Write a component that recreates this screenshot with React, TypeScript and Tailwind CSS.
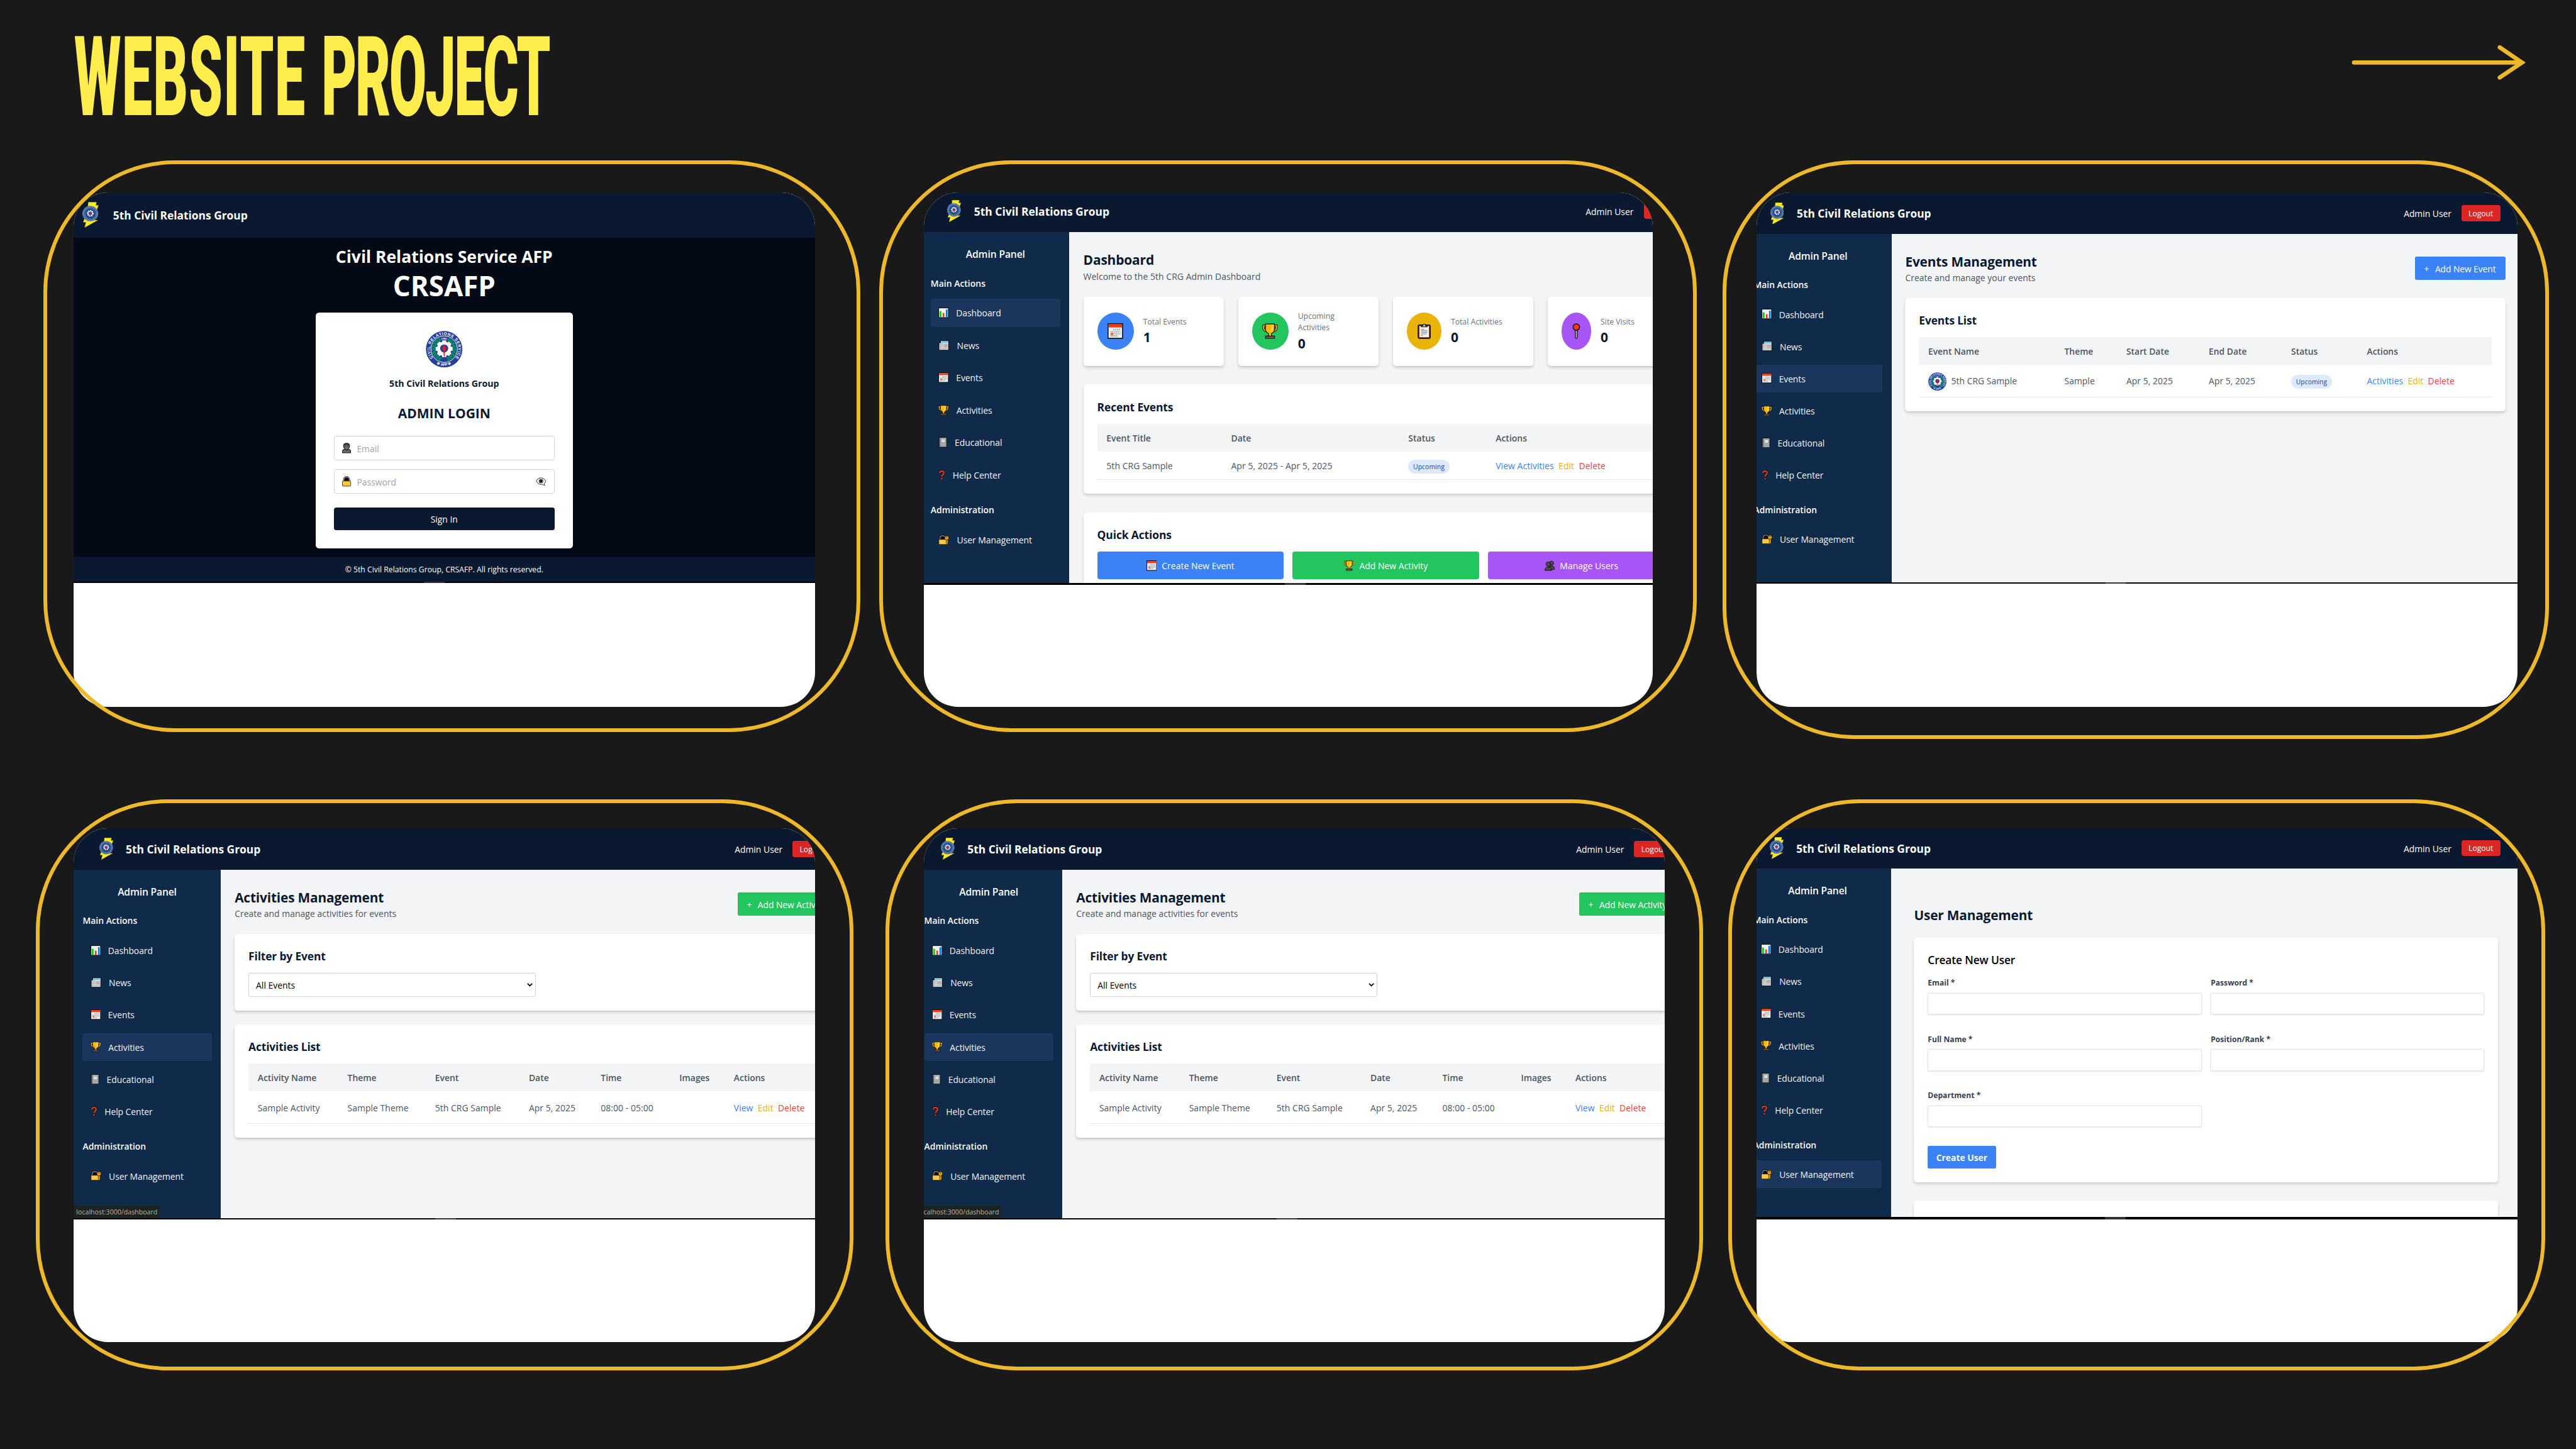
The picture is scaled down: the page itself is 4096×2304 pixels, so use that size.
import type { ReactNode } from "react";

/* ---------- type styles ---------- */
const T12 = "text-[11.4px] leading-[16px]";
const T14 = "text-[13.3px] leading-[22px] -mb-[2px]";
const T16 = "text-[15.2px] leading-[26px] -mb-[2px]";
const T18 = "text-[17.1px] leading-[30px] tracking-[-0.01em]";
const T20 = "text-[19px] leading-[30px]";
const T24 = "text-[22.8px] leading-[34px] -mb-[2px]";

/* ---------- icons ---------- */
type IconProps = { className?: string };

const ChartIcon = ({ className = "size-[18px]" }: IconProps) => (
  <svg viewBox="0 0 18 18" className={className}>
    <rect x="0.6" y="0.6" width="16.8" height="16.8" fill="#f2f2f2" stroke="#0c0f14" strokeWidth="1.2" />
    <rect x="2.2" y="6.2" width="3" height="10.4" fill="#16c60c" />
    <rect x="7.6" y="9.4" width="2.8" height="7.2" fill="#f03a17" />
    <rect x="13" y="3.4" width="2.8" height="13.2" fill="#0078d7" />
  </svg>
);

const NewsIcon = ({ className = "size-[18px]" }: IconProps) => (
  <svg viewBox="0 0 18 18" className={className}>
    <path d="M3.2 .7h14.2v16.6H1.8Q.6 17.3.6 16V4.4h2.6z" fill="#dcdcdc" stroke="#0c0f14" strokeWidth="1.2" />
    <path d="M3.4 4.4V16" stroke="#8d8d8d" strokeWidth=".8" />
    <rect x="4.4" y="2" width="11.8" height="2.2" fill="#50c8f0" />
    <rect x="8.6" y="6.4" width="7.6" height="6" fill="#b4b4b4" />
    <path d="M4.6 6h3M4.6 8.4h3M4.6 10.8h3M4.6 14.2h11.6" stroke="#a2a2a2" strokeWidth="1" />
  </svg>
);

const CalendarIcon = ({ className = "size-[18px]" }: IconProps) => (
  <svg viewBox="0 0 18 18" className={className}>
    <rect x=".6" y=".6" width="16.8" height="16.8" fill="#f2f2f2" stroke="#0c0f14" strokeWidth="1.2" />
    <rect x="1.2" y="1.2" width="15.6" height="3.6" fill="#f03a17" />
    <path d="M6.6 7.4h8.4M3.4 9.8H15M3.4 12.2H15M3.4 14.6h8.4" stroke="#9a9a9a" strokeWidth="1.5" strokeDasharray="1.3 .9" />
    <rect x="3.8" y="11" width="2.8" height="2.8" fill="#f0654a" />
  </svg>
);

const TrophyIcon = ({ className = "size-[18px]" }: IconProps) => (
  <svg viewBox="0 0 18 18" className={className}>
    <path d="M4 3H1.4v2.6Q1.8 8.6 5.4 9M14 3h2.6v2.6q-.4 3-4 3.4" fill="none" stroke="#0c0f14" strokeWidth="2.600" />
    <path d="M4 3H1.4v2.6Q1.8 8.6 5.4 9M14 3h2.6v2.6q-.4 3-4 3.4" fill="none" stroke="#f5a800" strokeWidth="1.4" />
    <path d="M3.8.8h10.4v6.4q-.4 3.6-3.6 4.6v2.4l2.4 1H5l2.4-1v-2.4Q4.200 10.800 3.800 7.200z" fill="#ffb900" stroke="#0c0f14" strokeWidth=".8" />
    <path d="M11.400 2v5q-.2 1.800-1.200 2.800" fill="none" stroke="#ffe08a" strokeWidth="1.300" />
    <path d="M3.800 14.800h10.400v2.600H3.800z" fill="#8e562e" stroke="#0c0f14" strokeWidth=".8" />
  </svg>
);

const NotebookIcon = ({ className = "w-[15px] h-[18px]" }: IconProps) => (
  <svg viewBox="0 0 15 18" className={className}>
    <rect x=".6" y=".6" width="13.800" height="16.800" rx=".8" fill="#a9adb0" stroke="#0c0f14" strokeWidth="1.200" />
    <rect x="1.200" y="1.200" width="2" height="15.600" fill="#4b4f52" />
    <path d="M4 3h10M4 6h10M4 9h10M4 12h10M4 15h10" stroke="#8a8e92" strokeWidth="1" strokeDasharray="1 1" />
    <rect x="6" y="4.200" width="5" height="4.200" fill="#f5f5f5" />
    <path d="M7.200 6.200h2.600" stroke="#777" strokeWidth=".7" />
  </svg>
);

const QuestionIcon = ({ className = "w-[12px] h-[18px]" }: IconProps) => (
  <svg viewBox="0 0 12 18" className={className}>
    <path d="M2.300 5.600C2 1 9.600 1 9.600 5.400c0 3-3.600 3-3.600 6.400" fill="none" stroke="#0c0f14" strokeWidth="4" />
    <circle cx="6" cy="15.400" r="2.300" fill="#0c0f14" />
    <path d="M2.300 5.600C2 1 9.600 1 9.600 5.400c0 3-3.600 3-3.600 6.400" fill="none" stroke="#f03a17" strokeWidth="2.300" />
    <circle cx="6" cy="15.400" r="1.500" fill="#f03a17" />
  </svg>
);

const LockKeyIcon = ({ className = "w-[19px] h-[18px]" }: IconProps) => (
  <svg viewBox="0 0 19 18" className={className}>
    <path d="M3 9V6.200C3 0 11.600 0 11.600 6.200V9z" fill="#0a0a0a" stroke="#0c0f14" strokeWidth="3" />
    <path d="M3 9V6.200C3 .6 11.600.6 11.600 6.200V9" fill="none" stroke="#8f8f8f" strokeWidth="1.200" />
    <path d="M.8 8.400h12.800v6.200l3 1.800-1.400.8H.8z" fill="#ffc83d" stroke="#0c0f14" strokeWidth=".9" />
    <path d="M13.400 8v8l1.600 1 1.400-1.200V8z" fill="#e8a200" stroke="#0c0f14" strokeWidth=".5" />
    <circle cx="14.600" cy="5.800" r="3.600" fill="#f5a800" stroke="#0c0f14" strokeWidth=".8" />
    <circle cx="14.600" cy="4.800" r=".9" fill="#3a2a00" />
  </svg>
);

const ClipboardIcon = ({ className = "w-[23px] h-[27px]" }: IconProps) => (
  <svg viewBox="0 0 23 27" className={className}>
    <rect x="1.200" y="3" width="20.600" height="23" rx="2" fill="#8e562e" stroke="#0a0a0a" strokeWidth="1.800" />
    <rect x="3.400" y="5" width="16.200" height="19" fill="#f2f2f2" />
    <path d="M6.400 6.200V4.200h2.800q.2-2.800 2.300-2.800t2.300 2.800h2.800v2z" fill="#c4c4c4" stroke="#0a0a0a" strokeWidth="1.200" />
    <path d="M6 10.400h5.400M6 13h11M6 15.600h11M6 18.400h9.400M6 21h3.400" stroke="#8d8d8d" strokeWidth="1.300" />
  </svg>
);

const PinIcon = ({ className = "w-[14px] h-[27px]" }: IconProps) => (
  <svg viewBox="0 0 14 27" className={className}>
    <path d="M7 10v14.600" stroke="#0a0a0a" strokeWidth="4.600" strokeLinecap="round" />
    <path d="M7 10v14.600" stroke="#c9c9c9" strokeWidth="1.900" strokeLinecap="round" />
    <circle cx="7" cy="6.600" r="5.600" fill="#f03a17" stroke="#0a0a0a" strokeWidth="1.600" />
  </svg>
);

const UsersIcon = ({ className = "size-[18px]" }: IconProps) => (
  <svg viewBox="0 0 18 18" className={className}>
    <g fill="#4c4c4c" stroke="#0c0c0c" strokeWidth="1">
      <circle cx="12" cy="5" r="3.600" />
      <path d="M6.800 15.600q0-5.800 5.200-5.800t5.400 5.800z" />
      <circle cx="6.400" cy="6.400" r="3.800" />
      <path d="M.6 17.400q0-6 5.800-6t5.800 6z" />
    </g>
  </svg>
);

const PersonIcon = ({ className = "w-[15.500px] h-[18px]" }: IconProps) => (
  <svg viewBox="0 0 15.500 18" className={className}>
    <g fill="#6b6b6b" stroke="#111" strokeWidth="1.100">
      <path d="M.7 17.400v-2.800q.4-3 3.600-3h6.900q3.200 0 3.600 3v2.800z" />
      <path d="M2.400 5.600Q2.600.7 7.800.7t5.300 4.900q0 3.200-2.300 4.600-.2 2.600-3 2.600t-3-2.600Q2.300 8.800 2.400 5.600z" />
    </g>
    <path d="M3 5.400Q3.400 1.400 7.800 1.400t4.700 4Q8.600 5 7.600 3.400 5.800 5.200 3 5.400z" fill="#383838" />
    <circle cx="6" cy="6.400" r=".6" fill="#111" />
    <circle cx="9.600" cy="6.400" r=".6" fill="#111" />
  </svg>
);

const LockIcon = ({ className = "w-[15.500px] h-[18px]" }: IconProps) => (
  <svg viewBox="0 0 15.500 18" className={className}>
    <path d="M3 9.600V6.400C3 0 12.500 0 12.500 6.400v3.200z" fill="#0a0a0a" stroke="#2a2a2a" strokeWidth="2.400" />
    <path d="M3 9V6.400C3 .4 12.500.4 12.500 6.400V9" fill="none" stroke="#9a9a9a" strokeWidth="1.100" />
    <rect x=".6" y="8.600" width="14.300" height="8.800" rx=".8" fill="#ffc83d" stroke="#3a2f10" strokeWidth="1" />
  </svg>
);

const EyeIcon = () => (
  <svg viewBox="0 0 18 15" className="h-[15px] w-[18px]">
    <path d="M.6 6.600Q4 .6 9 .6t8.400 6q-1 2.200-2.600 3.800l.8 4-4-2.200q-1.200.4-2.600.4-5 0-8.400-6z" fill="#fff" stroke="#222" strokeWidth="1" />
    <circle cx="9" cy="6.600" r="3.600" fill="#777" stroke="#111" strokeWidth=".6" />
    <circle cx="9" cy="6.600" r="2.200" fill="#000" />
  </svg>
);

/* ---------- emblems ---------- */
const gearTeeth = [0, 45, 90, 135, 180, 225, 270, 315];
const leafAngles = [28, 44, 60, 76, 92, 108, 124, 140, 156];

function Seal({ id, className }: { id: string; className: string }) {
  return (
    <svg viewBox="0 0 100 100" className={className}>
      <defs>
        <path id={`${id}-top`} d="M50 50m-38.500 0a38.500 38.500 0 1 1 77 0a38.500 38.500 0 1 1 -77 0" transform="rotate(-38 50 50)" />
        <path id={`${id}-bottom`} d="M4.500 50A45.500 45.500 0 0 0 95.500 50" />
      </defs>
      <circle cx="50" cy="50" r="49.500" fill="#25409a" />
      <circle cx="50" cy="50" r="36" fill="#25409a" stroke="#fff" strokeWidth="1.600" />
      <text fill="#fff" fontSize="11" fontWeight="700" fontFamily="Liberation Sans, sans-serif">
        <textPath href={`#${id}-top`} textLength="172">CIVIL RELATIONS SERVICE</textPath>
      </text>
      <text fill="#fff" fontSize="10" fontWeight="700" fontFamily="Liberation Sans, sans-serif" textAnchor="middle">
        <textPath href={`#${id}-bottom`} startOffset="50%">✻ AFP ✻</textPath>
      </text>
      <text x="50" y="24" fill="#fff" fontSize="8" fontWeight="700" fontFamily="Liberation Serif, serif" textAnchor="middle">1981</text>
      {leafAngles.map((a) => (
        <g key={a} fill="#00945e">
          <ellipse cx="50" cy="18.500" rx="5" ry="2.200" transform={`rotate(${a} 50 50) rotate(-35 50 18.500)`} />
          <ellipse cx="50" cy="23.500" rx="5" ry="2.200" transform={`rotate(${a} 50 50) rotate(35 50 23.500)`} />
          <ellipse cx="50" cy="18.500" rx="5" ry="2.200" transform={`rotate(${-a} 50 50) rotate(35 50 18.500)`} />
          <ellipse cx="50" cy="23.500" rx="5" ry="2.200" transform={`rotate(${-a} 50 50) rotate(-35 50 23.500)`} />
        </g>
      ))}
      <g fill="#fff">
        <circle cx="50" cy="49" r="19.500" />
        {gearTeeth.map((a) => (
          <rect key={a} x="44.500" y="26" width="11" height="12" rx="1.500" transform={`rotate(${a} 50 49)`} />
        ))}
      </g>
      <circle cx="50" cy="48" r="11" fill="#25409a" />
      <path d="M50 38c3.500 3 3.500 6 2.500 8h2.500v4l-2.500 3L50.500 74h-1L47.500 53 45 50v-4h2.500c-1-2-1-5 2.500-8z" fill="#ed1c24" />
    </svg>
  );
}

function BoltLogo({ className }: { className: string }) {
  return (
    <svg viewBox="0 0 24 38" className={className}>
      <path d="M8.800.2H21l-1 4.600h4L15.600 27H23L3.400 38 5.400 30H1.200L8 12z" fill="#f9ed1f" stroke="#b7a60a" strokeWidth=".4" />
      <circle cx="11.800" cy="17.200" r="11.500" fill="#2d46a0" stroke="#9aa3c8" strokeWidth=".6" />
      <circle cx="11.800" cy="17.200" r="9.700" fill="none" stroke="#8e9bd0" strokeWidth="2.200" strokeDasharray="1.100 .9" />
      <circle cx="11.800" cy="17.200" r="7.600" fill="#1c3f9c" stroke="#1d7a5c" strokeWidth="1.400" />
      <circle cx="11.800" cy="16.800" r="3.900" fill="none" stroke="#fff" strokeWidth="2.200" strokeDasharray="2 .9" />
      <circle cx="11.800" cy="16.800" r="3" fill="#2a3fb0" stroke="#fff" strokeWidth=".8" />
      <path d="M11.800 14.600v6" stroke="#e3242b" strokeWidth="1.500" />
    </svg>
  );
}

/* ---------- shared admin chrome ---------- */
type NavKey = "Dashboard" | "News" | "Events" | "Activities" | "Educational" | "Help Center" | "User Management";

const nav: { label: NavKey; icon: ReactNode; slot: string }[] = [
  { label: "Dashboard", icon: <ChartIcon />, slot: "w-[20px]" },
  { label: "News", icon: <NewsIcon className="h-[18px] w-[19px]" />, slot: "w-[21.500px]" },
  { label: "Events", icon: <CalendarIcon />, slot: "w-[20px]" },
  { label: "Activities", icon: <TrophyIcon />, slot: "w-[20.500px]" },
  { label: "Educational", icon: <NotebookIcon />, slot: "w-[17.700px]" },
  { label: "Help Center", icon: <QuestionIcon />, slot: "w-[14px]" },
];

function NavItem({ label, icon, slot, active }: { label: string; icon: ReactNode; slot: string; active: boolean }) {
  return (
    <li className={`flex h-12 items-center rounded px-3 ${active ? "bg-[#1b365d]" : ""}`}>
      <span className={`mr-3 flex shrink-0 pl-[1.500px] ${slot}`}>{icon}</span>
      <span className={`${T16} whitespace-nowrap tracking-[-0.005em] text-[#f3f4f6]`}>{label}</span>
    </li>
  );
}

function Sidebar({ active }: { active: NavKey }) {
  return (
    <aside className="w-64 shrink-0 bg-[#102a4a] px-4 pt-6">
      <h2 className={`${T18} mb-[22px] text-center font-semibold text-white`}>Admin Panel</h2>
      <h3 className="mb-[14px] text-[15.200px] font-semibold leading-[26px] text-white">Main Actions</h3>
      <ul className="mb-6 flex flex-col gap-2">
        {nav.map((n) => (
          <NavItem key={n.label} {...n} active={n.label === active} />
        ))}
      </ul>
      <h3 className="mb-[14px] text-[15.200px] font-semibold leading-[26px] text-white">Administration</h3>
      <ul>
        <NavItem label="User Management" icon={<LockKeyIcon />} slot="w-[21.500px]" active={active === "User Management"} />
      </ul>
    </aside>
  );
}

function AdminShell({
  active,
  offset,
  height,
  bar,
  status,
  children,
}: {
  active: NavKey;
  offset: string;
  height: string;
  bar: string;
  status?: boolean;
  children: ReactNode;
}) {
  return (
    <div className={`w-[1350px] ${offset}`}>
      <header className="flex h-[72px] items-center justify-between bg-[#0a192f] pl-[44.500px] pr-[33.500px]">
        <div className="flex items-center gap-[22.500px]">
          <BoltLogo className="h-[38px] w-[24px]" />
          <span className={`${T20} -mb-[2px] whitespace-nowrap font-bold text-white`}>5th Civil Relations Group</span>
        </div>
        <div className="flex items-center gap-[17.500px]">
          <span className={`${T16} text-white`}>Admin User</span>
          <span className="flex h-7 w-[67.500px] items-center justify-center rounded bg-[#dc2626]">
            <span className={`${T14} text-white`}>Logout</span>
          </span>
        </div>
      </header>
      <div className={`relative flex overflow-hidden bg-[#f3f4f6] ${height}`}>
        <Sidebar active={active} />
        <main className="min-w-0 flex-1">{children}</main>
        {status && (
          <div className="absolute bottom-0 left-0 h-[22px] w-[149px] rounded-tr-[3px] bg-[#1d2321] pl-[5px] text-[11.600px] leading-[23px] text-[#b5b5a5]">
            localhost:3000/dashboard
          </div>
        )}
      </div>
      <div className={`bg-black pl-[628.500px] ${bar}`}>
        <div className="h-full w-9 bg-[#333]" />
      </div>
    </div>
  );
}

function PageHead({ title, sub, action }: { title: string; sub: string; action?: ReactNode }) {
  return (
    <div className="mb-6 flex items-center justify-between">
      <div className="h-14">
        <h1 className={`${T24} tracking-[-0.008em] font-bold text-[#0a192f]`}>{title}</h1>
        <p className={`${T16} tracking-[0.003em] text-[#4b5563]`}>{sub}</p>
      </div>
      {action}
    </div>
  );
}

function AddButton({ label, className }: { label: string; className: string }) {
  return (
    <div className={`flex h-10 items-center rounded-[3px] px-4 text-white ${className}`}>
      <span className={`${T16} w-[19px]`}>+</span>
      <span className={`${T16} whitespace-nowrap tracking-[-0.006em]`}>{label}</span>
    </div>
  );
}

const CARD = "rounded-md bg-white shadow-[0_4px_6px_-1px_rgba(0,0,0,0.12),0_2px_4px_-2px_rgba(0,0,0,0.1)]";

function Card({ title, className, children }: { title: string; className?: string; children: ReactNode }) {
  return (
    <section className={`${CARD} p-6 ${className ?? ""}`}>
      <h2 className={`${T20} mb-[14px] font-bold tracking-[-0.008em] text-[#0a192f]`}>{title}</h2>
      {children}
    </section>
  );
}

function Table({ cols, rowHeight, heads, cells }: { cols: string; rowHeight: string; heads: string[]; cells: ReactNode[] }) {
  return (
    <div>
      <div className={`grid h-12 items-center bg-[#f3f4f6] ${cols}`}>
        {heads.map((h) => (
          <div key={h} className={`${T16} whitespace-nowrap pl-4 font-semibold text-[#4b5563]`}>{h}</div>
        ))}
      </div>
      <div className={`grid items-center border-b border-[#e5e7eb] ${cols} ${rowHeight}`}>
        {cells.map((c, i) => (
          <div key={i} className={`${T16} whitespace-nowrap pl-4 tracking-[0.004em] text-[#4b5563]`}>{c}</div>
        ))}
      </div>
    </div>
  );
}

const Badge = () => (
  <span className={`${T12} inline-flex h-6 w-[71px] items-center justify-center rounded-full bg-[#dbeafe] align-middle tracking-normal text-[#1e40af]`}>
    Upcoming
  </span>
);

const Links = ({ first }: { first: string }) => (
  <span className="flex gap-2">
    <span className="text-[#3b82f6]">{first}</span>
    <span className="text-[#eab308]">Edit</span>
    <span className="text-[#ef4444]">Delete</span>
  </span>
);

/* ---------- screens ---------- */
function LoginScreen() {
  return (
    <div className="-mt-[1.300px] w-[1290px] [zoom:0.914]">
      <header className="flex h-20 items-center bg-[#0a192f] pl-4">
        <BoltLogo className="mr-[25px] h-[45px] w-[28px]" />
        <span className={`${T20} -mb-[2px] whitespace-nowrap font-bold text-white`}>5th Civil Relations Group</span>
      </header>
      <div className="flex h-[554.800px] flex-col items-center bg-[#030a15] pt-[14px]">
        <h1 className="mb-[5px] text-[29px] font-bold leading-[39px] text-white">Civil Relations Service AFP</h1>
        <h2 className="mb-[21.500px] text-[48px] font-bold leading-[50.500px] text-white">CRSAFP</h2>
        <div className="flex w-[448px] flex-col items-center rounded-md bg-white px-8 pb-8 pt-8">
          <Seal id="login-seal" className="mb-[15px] size-16" />
          <p className="mb-[22px] text-[15.500px] font-bold leading-[26px] text-[#0a192f]">5th Civil Relations Group</p>
          <h3 className="mb-[22px] text-[23px] font-bold leading-[34px] text-[#0a192f]">ADMIN LOGIN</h3>
          <div className="mb-4 flex h-[42px] w-full items-center rounded border border-[#d1d5db] pl-[13.500px]">
            <PersonIcon />
            <span className={`${T16} ml-[10px] text-[#9ca3af]`}>Email</span>
          </div>
          <div className="mb-6 flex h-[42px] w-full items-center rounded border border-[#d1d5db] pl-[13.500px] pr-[13.500px]">
            <LockIcon />
            <span className={`${T16} ml-[10px] flex-1 text-[#9ca3af]`}>Password</span>
            <EyeIcon />
          </div>
          <div className="flex h-10 w-full items-center justify-center rounded bg-[#0a192f]">
            <span className={`${T16} text-white`}>Sign In</span>
          </div>
        </div>
      </div>
      <footer className="flex h-[43.500px] items-center justify-center bg-[#0a192f]">
        <span className={`${T14} tracking-[0.003em] text-white`}>© 5th Civil Relations Group, CRSAFP. All rights reserved.</span>
      </footer>
      <div className="h-[2px] bg-black pl-[610px]">
        <div className="h-full w-9 bg-[#333]" />
      </div>
    </div>
  );
}

const stats = [
  { label: "Total Events", value: "1", bg: "bg-[#3b82f6] w-[63.500px]", icon: <CalendarIcon className="size-[27px]" />, wrap: "" },
  { label: "Upcoming Activities", value: "0", bg: "bg-[#22c55e] w-[63.500px]", icon: <TrophyIcon className="size-[27px]" />, wrap: "w-[72px]" },
  { label: "Total Activities", value: "0", bg: "bg-[#eab308] w-[60.500px]", icon: <ClipboardIcon />, wrap: "" },
  { label: "Site Visits", value: "0", bg: "bg-[#a855f7] w-[52px]", icon: <PinIcon />, wrap: "" },
];

const quickActions = [
  { label: "Create New Event", bg: "bg-[#3b82f6]", icon: <CalendarIcon /> },
  { label: "Add New Activity", bg: "bg-[#22c55e]", icon: <TrophyIcon /> },
  { label: "Manage Users", bg: "bg-[#a855f7]", icon: <UsersIcon /> },
];

function DashboardScreen() {
  return (
    <div className="[zoom:0.9196]">
      <AdminShell active="Dashboard" offset="-ml-[3.800px] -mt-[4px]" height="h-[607.500px]" bar="h-[2.500px]">
        <div className="px-6 pt-8">
          <PageHead title="Dashboard" sub="Welcome to the 5th CRG Admin Dashboard" />
          <div className="mb-8 grid grid-cols-4 gap-6">
            {stats.map((s) => (
              <div key={s.label} className={`${CARD} flex h-[120px] items-center px-6`}>
                <div className={`mr-4 flex h-16 shrink-0 items-center justify-center rounded-[50%] ${s.bg}`}>{s.icon}</div>
                <div className={s.wrap}>
                  <p className="text-[13.300px] leading-[20px] text-[#6b7280]">{s.label}</p>
                  <p className={`${T24} font-bold text-[#0a192f]`}>{s.value}</p>
                </div>
              </div>
            ))}
          </div>
          <Card title="Recent Events" className="mb-8">
            <Table
              cols="grid-cols-[215.500px_306.500px_151px_1fr]"
              rowHeight="h-[49px]"
              heads={["Event Title", "Date", "Status", "Actions"]}
              cells={["5th CRG Sample", "Apr 5, 2025 - Apr 5, 2025", <Badge />, <Links first="View Activities" />]}
            />
          </Card>
          <Card title="Quick Actions">
            <div className="grid grid-cols-3 gap-4">
              {quickActions.map((q) => (
                <div key={q.label} className={`flex h-12 items-center justify-center gap-[9px] rounded text-white ${q.bg}`}>
                  {q.icon}
                  <span className={T16}>{q.label}</span>
                </div>
              ))}
            </div>
          </Card>
        </div>
      </AdminShell>
    </div>
  );
}

function EventsScreen() {
  return (
    <div className="[zoom:0.9127]">
      <AdminShell active="Events" offset="-ml-[20.500px] -mt-[0.200px]" height="h-[607px]" bar="h-[2px]">
        <div className="px-6 pt-8">
          <PageHead
            title="Events Management"
            sub="Create and manage your events"
            action={<AddButton label="Add New Event" className="w-[158px] bg-[#3b82f6]" />}
          />
          <Card title="Events List">
            <Table
              cols="grid-cols-[237.300px_107.900px_143.600px_143.500px_132px_1fr]"
              rowHeight="h-[57px]"
              heads={["Event Name", "Theme", "Start Date", "End Date", "Status", "Actions"]}
              cells={[
                <span className="flex items-center gap-2">
                  <Seal id="row-seal" className="size-8" />
                  5th CRG Sample
                </span>,
                "Sample",
                "Apr 5, 2025",
                "Apr 5, 2025",
                <Badge />,
                <Links first="Activities" />,
              ]}
            />
          </Card>
        </div>
      </AdminShell>
    </div>
  );
}

function ActivitiesScreen({ offset }: { offset: string }) {
  return (
    <div className="[zoom:0.9155]">
      <AdminShell active="Activities" offset={offset} height="h-[605.500px]" bar="h-[2px]" status>
        <div className="px-6 pt-8">
          <PageHead
            title="Activities Management"
            sub="Create and manage activities for events"
            action={<AddButton label="Add New Activity" className="w-[172.500px] bg-[#22c55e]" />}
          />
          <Card title="Filter by Event" className="mb-6">
            <div className="flex h-[41px] w-[499px] items-center justify-between rounded-[3px] border border-[#d1d5db] pl-3 pr-[4px]">
              <span className={`${T16} text-black`}>All Events</span>
              <svg viewBox="0 0 10 6" className="h-[6px] w-[10px]">
                <path d="M1 1l4 4 4-4" fill="none" stroke="#000" strokeWidth="2" />
              </svg>
            </div>
          </Card>
          <Card title="Activities List">
            <Table
              cols="grid-cols-[156px_152px_163px_125px_136.500px_94.500px_1fr]"
              rowHeight="h-[57px]"
              heads={["Activity Name", "Theme", "Event", "Date", "Time", "Images", "Actions"]}
              cells={["Sample Activity", "Sample Theme", "5th CRG Sample", "Apr 5, 2025", "08:00 - 05:00", "", <Links first="View" />]}
            />
          </Card>
        </div>
      </AdminShell>
    </div>
  );
}

function UsersScreen() {
  return (
    <div className="[zoom:0.9134]">
      <AdminShell active="User Management" offset="-ml-[21.500px] -mt-[1.300px]" height="h-[606.500px]" bar="h-[4px]">
        <div className="pl-10 pt-16">
          <h1 className="mb-[22px] text-[22.800px] font-bold leading-[34px] tracking-[-0.008em] text-[#0a192f]">User Management</h1>
          <section className={`${CARD} mb-8 w-[1017px] p-6`}>
            <h2 className={`${T20} mb-[14px] font-semibold tracking-[-0.008em] text-black`}>Create New User</h2>
            <div className="grid grid-cols-2 gap-x-4 gap-y-8">
              {["Email *", "Password *", "Full Name *", "Position/Rank *", "Department *"].map((l) => (
                <div key={l}>
                  <p className="mb-[6.500px] text-[13.300px] font-bold leading-[21.500px] text-[#374151]">{l}</p>
                  <div className="h-[38px] rounded-[3px] border border-[#e5e7eb] bg-white shadow-[0_1px_3px_rgba(0,0,0,0.12)]" />
                </div>
              ))}
            </div>
            <div className="mt-8 flex h-10 w-[118.500px] items-center justify-center rounded-[3px] bg-[#3b82f6]">
              <span className={`${T16} font-bold text-white`}>Create User</span>
            </div>
          </section>
          <section className={`${CARD} h-40 w-[1017px]`} />
        </div>
      </AdminShell>
    </div>
  );
}

/* ---------- slide ---------- */
function Frame({ outer, window: win, children }: { outer: string; window: string; children: ReactNode }) {
  return (
    <div className={`relative shrink-0 ${outer}`}>
      <div className={`overflow-hidden rounded-[54.500px] bg-white ${win}`}>{children}</div>
      <div className="pointer-events-none absolute inset-0 rounded-[209px] border-[6.200px] border-[#eeb82b]" />
    </div>
  );
}

export default function App() {
  return (
    <div className="h-[2304px] w-[4096px] overflow-hidden bg-[#191919] font-['Open_Sans',sans-serif]">
      <header className="flex h-[255px] items-start justify-between pl-[118px] pr-[79px] pt-[50px]">
        <h1 className="origin-top-left scale-x-[0.487] whitespace-nowrap font-['Roboto',sans-serif] text-[176px] font-black leading-[146px] text-[#ffed4e]">
          <span className="tracking-[3px]">WEBSITE</span> <span className="ml-[7px] tracking-[-4px]">PROJECT</span>
        </h1>
        <svg viewBox="5474 100 412 92" className="mt-[18.300px] h-[62.800px] w-[281.300px] shrink-0">
          <path d="M5484.200 146H5874" stroke="#eeb82b" strokeWidth="9.700" strokeLinecap="round" />
          <path d="M5823.700 110.700L5875.500 146L5823.700 181" fill="none" stroke="#eeb82b" strokeWidth="9.700" strokeLinecap="round" />
        </svg>
      </header>

      <div className="flex h-[1016px] items-start pl-[68.900px]">
        <Frame outer="mr-[30.200px] h-[909px] w-[1299.200px] pl-[47.900px] pt-[51.200px]" window="h-[818px] w-[1179.300px]">
          <LoginScreen />
        </Frame>
        <Frame outer="mr-[41.400px] h-[909px] w-[1299.300px] pl-[70.300px] pt-[51.200px]" window="h-[818px] w-[1159.500px]">
          <DashboardScreen />
        </Frame>
        <Frame outer="h-[919.600px] w-[1314px] pl-[53.700px] pt-[51.200px]" window="h-[818px] w-[1210.200px]">
          <EventsScreen />
        </Frame>
      </div>

      <div className="flex items-start pl-[57.300px]">
        <Frame outer="mr-[51.700px] h-[908.300px] w-[1299.300px] pl-[59.500px] pt-[45.800px]" window="h-[817.400px] w-[1179.300px]">
          <ActivitiesScreen offset="mt-0" />
        </Frame>
        <Frame outer="mr-[40.200px] h-[908.300px] w-[1299.300px] pl-[60.300px] pt-[45.800px]" window="h-[817.400px] w-[1178.500px]">
          <ActivitiesScreen offset="-ml-[14.900px]" />
        </Frame>
        <Frame outer="h-[908.300px] w-[1299.400px] pl-[44.900px] pt-[45.800px]" window="h-[817.400px] w-[1210.200px]">
          <UsersScreen />
        </Frame>
      </div>
    </div>
  );
}
